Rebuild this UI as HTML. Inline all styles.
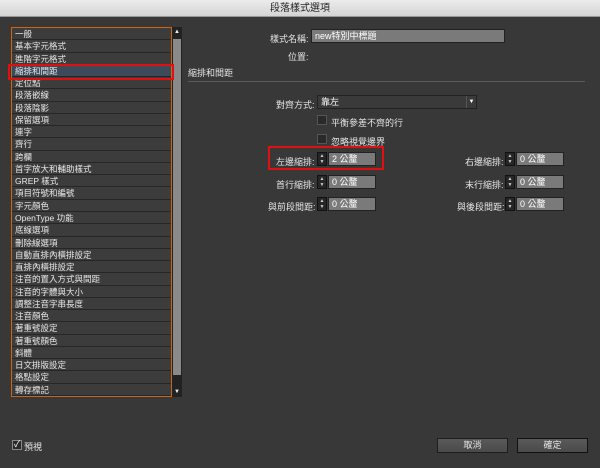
<!DOCTYPE html>
<html><head><meta charset="utf-8"><style>
*{margin:0;padding:0;box-sizing:border-box}
body{width:600px;height:468px;background:#383838;font-family:"Liberation Sans","Noto Sans CJK TC",sans-serif;font-size:9px;color:#e6e6e6;position:relative;overflow:hidden}
.title{position:absolute;left:0;top:0;width:600px;height:17px;background:linear-gradient(#ececec,#d4d4d4);color:#222;text-align:center;font-size:10px;line-height:17px;border-bottom:1px solid #999}
.list{position:absolute;left:11px;top:27px;width:161px;height:370px;border:1px solid #c8661c;background:#3c3c3c}
.list div{height:12.28px;line-height:12px;padding-left:3px;border-bottom:1px solid #262626;font-size:8.5px;white-space:nowrap;color:#e8e8e8}
.list .sel{background:#3d4a5a}
.sb{position:absolute;left:172px;top:27px;width:10px;height:370px;background:#222}
.sb .th{position:absolute;left:1px;top:12px;width:8px;height:336px;background:#8a8a8a}
.sb .a{position:absolute;left:0;width:10px;height:10px;color:#eee;font-size:6px;text-align:center;line-height:10px}
.red{position:absolute;border:2px solid #e01010}
.abs{position:absolute;white-space:nowrap}
.inp{position:absolute;background:#7a7a7a;border:1px solid #222;color:#fff;font-size:9px;line-height:12px;padding-left:3px}
.sp{position:absolute;width:10px;height:14px;background:#262626;border:1px solid #111;color:#ccc;font-size:5px;line-height:6px;text-align:center}
.cb{position:absolute;width:10px;height:10px;background:#2a2a2a;border:1px solid #555}
.btn{position:absolute;height:15px;width:71px;background:linear-gradient(#5a5a5a,#4a4a4a);border:1px solid #1e1e1e;text-align:center;line-height:13px;font-size:9px}
</style></head><body>
<div class="title">段落樣式選項</div>
<div class="list">
<div>一般</div><div>基本字元格式</div><div>進階字元格式</div><div class="sel">縮排和間距</div><div>定位點</div><div>段落嵌線</div><div>段落陰影</div><div>保留選項</div><div>連字</div><div>齊行</div><div>跨欄</div><div>首字放大和輔助樣式</div><div>GREP 樣式</div><div>項目符號和編號</div><div>字元顏色</div><div>OpenType 功能</div><div>底線選項</div><div>刪除線選項</div><div>自動直排內橫排設定</div><div>直排內橫排設定</div><div>注音的置入方式與間距</div><div>注音的字體與大小</div><div>調整注音字串長度</div><div>注音顏色</div><div>著重號設定</div><div>著重號顏色</div><div>斜體</div><div>日文排版設定</div><div>格點設定</div><div>轉存標記</div>
</div>
<div class="sb"><div class="a" style="top:0">▲</div><div class="th"></div><div class="a" style="bottom:0">▼</div></div>
<div class="red" style="left:8px;top:64px;width:166px;height:16px"></div>

<div class="abs" style="left:270px;top:32px">樣式名稱:</div>
<div class="inp" style="left:311px;top:29px;width:194px;height:14px">new特別中標題</div>
<div class="abs" style="left:288px;top:50px">位置:</div>
<div class="abs" style="left:188px;top:66px">縮排和間距</div>
<div style="position:absolute;left:188px;top:81px;width:397px;height:1px;background:#5a5a5a"></div>

<div class="abs" style="left:276px;top:98px">對齊方式:</div>
<div class="inp" style="left:317px;top:95px;width:160px;height:14px;background:#3a3a3a;border-color:#222">靠左<span style="position:absolute;right:0;top:0;width:10px;height:12px;border-left:1px solid #555;font-size:6px;text-align:center">▼</span></div>
<div class="cb" style="left:317px;top:115px"></div><div class="abs" style="left:331px;top:116px">平衡參差不齊的行</div>
<div class="cb" style="left:317px;top:134px"></div><div class="abs" style="left:331px;top:135px">忽略視覺邊界</div>

<div class="abs" style="left:276px;top:155px">左邊縮排:</div>
<div class="sp" style="left:317px;top:152px">▲<br>▼</div><div class="inp" style="left:328px;top:152px;width:48px;height:14px">2 公釐</div>
<div class="red" style="left:268px;top:146px;width:116px;height:24px"></div>
<div class="abs" style="left:465px;top:155px">右邊縮排:</div>
<div class="sp" style="left:505px;top:152px">▲<br>▼</div><div class="inp" style="left:516px;top:152px;width:48px;height:14px">0 公釐</div>

<div class="abs" style="left:276px;top:178px">首行縮排:</div>
<div class="sp" style="left:317px;top:175px">▲<br>▼</div><div class="inp" style="left:328px;top:175px;width:48px;height:14px">0 公釐</div>
<div class="abs" style="left:465px;top:178px">末行縮排:</div>
<div class="sp" style="left:505px;top:175px">▲<br>▼</div><div class="inp" style="left:516px;top:175px;width:48px;height:14px">0 公釐</div>

<div class="abs" style="left:268px;top:200px">與前段間距:</div>
<div class="sp" style="left:317px;top:197px">▲<br>▼</div><div class="inp" style="left:328px;top:197px;width:48px;height:14px">0 公釐</div>
<div class="abs" style="left:457px;top:200px">與後段間距:</div>
<div class="sp" style="left:505px;top:197px">▲<br>▼</div><div class="inp" style="left:516px;top:197px;width:48px;height:14px">0 公釐</div>

<div class="cb" style="left:12px;top:440px;border-color:#888;font-size:9px;line-height:7px;color:#fff;text-align:center">✓</div>
<div class="abs" style="left:24px;top:440px">預視</div>
<div class="btn" style="left:437px;top:438px">取消</div>
<div class="btn" style="left:517px;top:438px;border-color:#111">確定</div>
</body></html>
